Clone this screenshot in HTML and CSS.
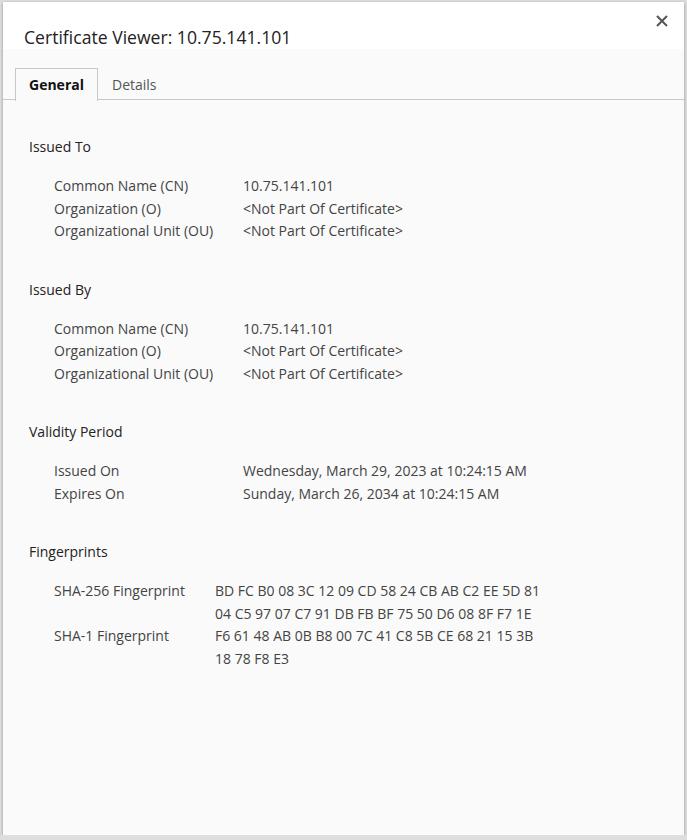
FILE: index.html
```html
<!DOCTYPE html>
<html lang="en">
<head>
    <meta charset="UTF-8">
    <title>Certificate Viewer: 10.75.141.101</title>
    <link rel="stylesheet" href="styles.css">
</head>
<body>
    <div class="dialog">
        <header class="dialog-header">
            <h1>Certificate Viewer: 10.75.141.101</h1>
            <button class="close" type="button" aria-label="Close">
                <svg width="12" height="12" viewBox="0 0 12 12"><path d="M1 1L11 11M11 1L1 11" stroke="#555" stroke-width="2"/></svg>
            </button>
        </header>
        <div class="tabs">
            <div class="tab active">General</div>
            <div class="tab">Details</div>
        </div>
        <div class="content">
            <section class="group">
                <h2>Issued To</h2>
                <div class="rows">
                    <div class="label">Common Name (CN)</div><div class="value">10.75.141.101</div>
                    <div class="label">Organization (O)</div><div class="value">&lt;Not Part Of Certificate&gt;</div>
                    <div class="label">Organizational Unit (OU)</div><div class="value">&lt;Not Part Of Certificate&gt;</div>
                </div>
            </section>
            <section class="group">
                <h2>Issued By</h2>
                <div class="rows">
                    <div class="label">Common Name (CN)</div><div class="value">10.75.141.101</div>
                    <div class="label">Organization (O)</div><div class="value">&lt;Not Part Of Certificate&gt;</div>
                    <div class="label">Organizational Unit (OU)</div><div class="value">&lt;Not Part Of Certificate&gt;</div>
                </div>
            </section>
            <section class="group">
                <h2>Validity Period</h2>
                <div class="rows">
                    <div class="label">Issued On</div><div class="value">Wednesday, March 29, 2023 at 10:24:15 AM</div>
                    <div class="label">Expires On</div><div class="value">Sunday, March 26, 2034 at 10:24:15 AM</div>
                </div>
            </section>
            <section class="group">
                <h2>Fingerprints</h2>
                <div class="rows narrow">
                    <div class="label">SHA-256 Fingerprint</div><div class="value">BD FC B0 08 3C 12 09 CD 58 24 CB AB C2 EE 5D 81<br>04 C5 97 07 C7 91 DB FB BF 75 50 D6 08 8F F7 1E</div>
                    <div class="label">SHA-1 Fingerprint</div><div class="value">F6 61 48 AB 0B B8 00 7C 41 C8 5B CE 68 21 15 3B<br>18 78 F8 E3</div>
                </div>
            </section>
        </div>
    </div>
</body>
</html>
```
FILE: styles.css
```css
body {
    margin: 0;
    background-color: #dedede;
    font-family: 'Open Sans', 'Noto Sans', sans-serif;
    color: #333333;
}
.dialog {
    margin: 2px 3px 0 3px;
    height: 833px;
    background-color: #fafafa;
    box-shadow: 0 1px 3px rgba(0, 0, 0, 0.35);
    display: flex;
    flex-direction: column;
}
.dialog-header {
    background-color: #ffffff;
    height: 47px;
    display: flex;
    justify-content: space-between;
    align-items: flex-start;
}
.dialog-header h1 {
    margin: 23px 0 0 21px;
    font-size: 17.6px;
    font-weight: normal;
    line-height: 24px;
    color: #222222;
}
.close {
    background: none;
    border: none;
    padding: 0;
    margin: 13px 15px 0 0;
    width: 14px;
    height: 14px;
    cursor: pointer;
}
.tabs {
    display: flex;
    margin-top: 19px;
    padding-left: 12px;
    border-bottom: 1px solid #c8c8c8;
    height: 31px;
}
.tab {
    padding: 0 13px;
    font-size: 14px;
    line-height: 31px;
    color: #555555;
    border: 1px solid transparent;
    border-bottom: none;
}
.tab.active {
    font-weight: bold;
    color: #111111;
    border-color: #c8c8c8;
    background-color: #fafafa;
    margin-bottom: -1px;
    height: 32px;
}
.content {
    padding: 36px 0 0 26px;
}
.group {
    margin-bottom: 36px;
}
.group h2 {
    margin: 0 0 17px 0;
    font-size: 14px;
    font-weight: normal;
    line-height: 22px;
    color: #222222;
}
.rows {
    display: grid;
    grid-template-columns: 189px auto;
    padding-left: 25px;
    font-size: 14px;
    line-height: 22.5px;
    color: #444444;
}
.rows.narrow {
    grid-template-columns: 161px auto;
}
```
